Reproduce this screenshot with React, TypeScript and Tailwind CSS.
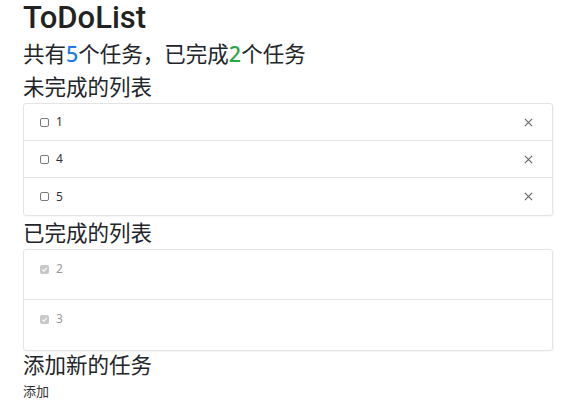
import React from "react";

interface Task {
  id: number;
  title: string;
  done: boolean;
}

const tasks: Task[] = [
  { id: 1, title: "1", done: false },
  { id: 2, title: "2", done: true },
  { id: 3, title: "3", done: true },
  { id: 4, title: "4", done: false },
  { id: 5, title: "5", done: false },
];

const Check: React.FC<{ checked: boolean }> = ({ checked }) =>
  checked ? (
    <span className="flex h-[9px] w-[9px] items-center justify-center rounded-[2px] bg-[#c8c8c8]">
      <svg viewBox="0 0 10 10" className="h-[7px] w-[7px]">
        <path d="M2 5.2 L4.2 7.3 L8.2 2.8" fill="none" stroke="#ffffff" strokeWidth="1.6" />
      </svg>
    </span>
  ) : (
    <span className="block h-[9px] w-[9px] rounded-[2px] border border-[#7a7a7a] bg-white" />
  );

const TodoRow: React.FC<{ task: Task }> = ({ task }) => (
  <li
    className={
      task.done
        ? "flex h-[50px] items-start pl-[16px] pr-[18px] pt-[14px]"
        : "flex h-[37px] items-center justify-between pl-[16px] pr-[18px]"
    }
  >
    <label className="flex items-center gap-[7px]">
      <Check checked={task.done} />
      <span className={task.done ? "text-[12px] leading-[10px] text-[#9a9a9a]" : "text-[12px] leading-[10px] text-[#333]"}>
        {task.title}
      </span>
    </label>
    {!task.done && (
      <button className="flex h-[12px] w-[12px] items-center justify-center">
        <svg viewBox="0 0 10 10" className="h-[9px] w-[9px]">
          <path d="M1 1 L9 9 M9 1 L1 9" stroke="#6b6b6b" strokeWidth="1.4" />
        </svg>
      </button>
    )}
  </li>
);

const App: React.FC = () => {
  const undone = tasks.filter((t) => !t.done);
  const done = tasks.filter((t) => t.done);

  return (
    <div
      className="h-[400px] overflow-hidden bg-white px-[23px] text-[#212529]"
      style={{ fontFamily: '"Noto Sans", "Noto Sans CJK SC", sans-serif' }}
    >
      <h1 className="mb-[1px] font-['Roboto',sans-serif] text-[31px] font-medium leading-[36px] text-[#222]">ToDoList</h1>
      <h3 className="text-[21.5px] leading-[33px]">
        共有<span className="font-medium text-[#1e7be6]">{tasks.length}</span>个任务，已完成
        <span className="font-medium text-[#28a745]">{done.length}</span>个任务
      </h3>
      <h3 className="text-[21.5px] leading-[33px]">未完成的列表</h3>
      <ul className="divide-y divide-[#e4e4e4] rounded-[3px] border border-[#e4e4e4] shadow-[1px_1px_2px_rgba(0,0,0,0.04)]">
        {undone.map((t) => (
          <TodoRow key={t.id} task={t} />
        ))}
      </ul>
      <h3 className="text-[21.5px] leading-[33px]">已完成的列表</h3>
      <ul className="divide-y divide-[#e4e4e4] rounded-[3px] border border-[#e4e4e4] shadow-[1px_1px_2px_rgba(0,0,0,0.04)]">
        {done.map((t) => (
          <TodoRow key={t.id} task={t} />
        ))}
      </ul>
      <h3 className="text-[21.5px] leading-[27px]">添加新的任务</h3>
      <button className="text-[13px] leading-[24px] text-[#333]">添加</button>
    </div>
  );
};

export default App;
